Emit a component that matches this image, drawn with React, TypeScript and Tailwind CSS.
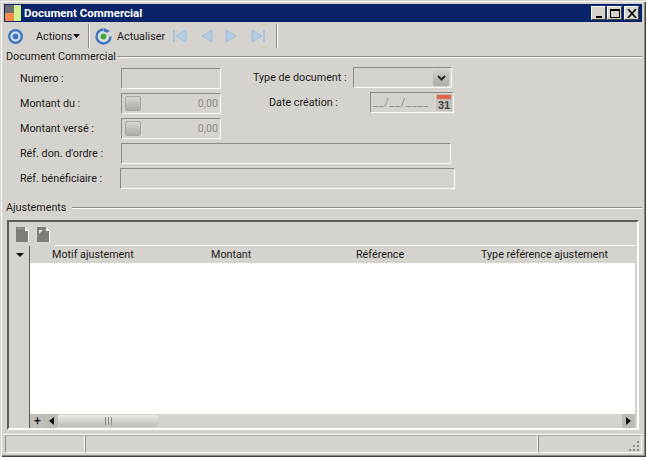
import React from "react";

const fontStyle = "font-['Roboto','Liberation_Sans',sans-serif]";
const sunken = "border border-[#8c8a84] border-r-white border-b-white bg-[#d6d3ce]";

const CaptionButton = ({ children }: { children: React.ReactNode }) => (
  <div className="flex h-[14px] w-[15px] items-center justify-center border border-[#404040] border-l-white border-t-white bg-[#d6d3ce]">
    {children}
  </div>
);

const GroupTitle = ({ title, width }: { title: string; width: string }) => (
  <div className="flex h-[13px] items-center pl-[2px]">
    <span className={`${width} shrink-0 whitespace-nowrap text-[#1a1a1a]`}>{title}</span>
    <div className="h-[2px] flex-1 border-t border-b border-t-[#8c8a84] border-b-white" />
  </div>
);

const NavIcon = ({ dir, bar }: { dir: "left" | "right"; bar?: boolean }) => (
  <svg width="16" height="16" viewBox="0 0 16 16">
    {dir === "left" ? (
      <>
        {bar && <rect x="1" y="2" width="2" height="12" fill="#a9c4dc" />}
        <path d="M14 2v12L4 8z" fill="#b4cde4" stroke="#97b6d3" strokeWidth="0.8" />
      </>
    ) : (
      <>
        <path d="M2 2v12l10-6z" fill="#b4cde4" stroke="#97b6d3" strokeWidth="0.8" />
        {bar && <rect x="13" y="2" width="2" height="12" fill="#a9c4dc" />}
      </>
    )}
  </svg>
);

const Spinner = () => (
  <div className="ml-[3px] h-[15px] w-[16px] rounded-[2px] border border-[#a8a6a0] bg-gradient-to-b from-[#d8d6d0] to-[#aeaca6]" />
);

const AmountRow = ({ label }: { label: string }) => (
  <div className="flex h-[21px] items-center">
    <span className="w-[101px] whitespace-nowrap text-[#1a1a1a]">{label}</span>
    <div className={`${sunken} flex h-[21px] w-[100px] items-center justify-between pr-[2px]`}>
      <Spinner />
      <span className="text-[#8c8a84]">0,00</span>
    </div>
  </div>
);

const PageIcon = ({ flip }: { flip?: boolean }) => (
  <svg width="13" height="15" viewBox="0 0 13 15">
    <path d="M0 0h9l4 4v11H0z" fill="#7f7d79" />
    <path d="M9 0l4 4H9z" fill="#fff" />
    <path d="M13 4v11h-1V4z" fill="#fff" />
    {flip ? <path d="M2 3h4L2 7z" fill="#e4e2dc" /> : <path d="M1 1h7v1H1z" fill="#a5a39e" />}
  </svg>
);

const HeaderCell = ({ width, children }: { width: string; children: string }) => (
  <div className={`${width} shrink-0 whitespace-nowrap text-[#1a1a1a]`}>{children}</div>
);

const ToolbarSeparator = ({ className }: { className: string }) => (
  <div className={`${className} h-[24px] w-[2px] border-l border-r border-l-[#8c8a84] border-r-white`} />
);

export default function App() {
  return (
    <div className={`${fontStyle} flex h-[457px] w-[646px] flex-col overflow-hidden bg-[#d6d3ce] p-[4px] text-[10.75px] leading-[13px] shadow-[inset_1px_1px_0_#d6d3ce,inset_2px_2px_0_#fff,inset_-1px_-1px_0_#404040,inset_-2px_-2px_0_#8c8a84]`}>
      {/* Title bar */}
      <div className="flex h-[18px] shrink-0 items-center justify-between bg-[#0a246a] pr-[3px]">
        <div className="flex items-center gap-[3px] pl-[1px]">
          <svg width="16" height="16" viewBox="0 0 16 16">
            <rect x="0" y="0" width="16" height="16" fill="#6e6e6e" />
            <rect x="0" y="8" width="9" height="8" fill="#f58a4b" />
            <rect x="9" y="0" width="7" height="16" fill="#d2f08c" />
          </svg>
          <span className="whitespace-nowrap text-[11.5px] font-bold text-white">Document Commercial</span>
        </div>
        <div className="flex">
          <CaptionButton>
            <div className="mt-[7px] h-[2px] w-[6px] bg-black" />
          </CaptionButton>
          <div className="ml-[1px]">
            <CaptionButton>
              <div className="h-[9px] w-[10px] border border-t-2 border-black" />
            </CaptionButton>
          </div>
          <div className="ml-[2px]">
            <CaptionButton>
              <svg width="10" height="9" viewBox="0 0 10 9">
                <path d="M1 0l8 9M9 0L1 9" stroke="#000" strokeWidth="1.6" />
              </svg>
            </CaptionButton>
          </div>
        </div>
      </div>

      {/* Toolbar */}
      <div className="flex h-[28px] shrink-0 items-center pl-[3px]">
        <svg width="17" height="17" viewBox="0 0 17 17">
          <circle cx="8.5" cy="8.5" r="7.5" fill="#3f78c0" />
          <circle cx="8.5" cy="8.5" r="5" fill="#dfe9f5" />
          <circle cx="8.5" cy="8.5" r="3" fill="#3f78c0" />
        </svg>
        <span className="ml-[12px] w-[35px] whitespace-nowrap text-[#1a1a1a]">Actions</span>
        <svg className="ml-[2px]" width="8" height="4" viewBox="0 0 8 4">
          <path d="M0 0h7L3.5 4z" fill="#111" />
        </svg>
        <ToolbarSeparator className="ml-[7px]" />
        <svg className="ml-[5px]" width="17" height="17" viewBox="0 0 17 17">
          <path d="M8.5 1.5a7 7 0 1 0 7 7" fill="none" stroke="#3f78c0" strokeWidth="2.4" />
          <path d="M9 0l6 3-6 3.5z" fill="#3f78c0" />
          <circle cx="8.5" cy="8.5" r="4.8" fill="#dfe3ea" />
          <circle cx="8.5" cy="8.5" r="3" fill="#3fa83f" />
        </svg>
        <span className="ml-[5px] w-[47px] whitespace-nowrap text-[#1a1a1a]">Actualiser</span>
        <div className="ml-[8px] flex items-center gap-[10px]">
          <NavIcon dir="left" bar />
          <NavIcon dir="left" />
          <NavIcon dir="right" />
          <NavIcon dir="right" bar />
        </div>
        <ToolbarSeparator className="ml-[10px]" />
      </div>

      {/* Document section */}
      <div className="flex flex-col">
        <GroupTitle title="Document Commercial" width="w-[111px]" />
        <div className="mt-[5px] flex pl-[16px]">
          <div className="flex flex-col gap-[4px]">
            <div className="flex h-[21px] items-center">
              <span className="w-[101px] whitespace-nowrap text-[#1a1a1a]">Numero :</span>
              <div className={`${sunken} h-[21px] w-[100px]`} />
            </div>
            <AmountRow label="Montant du :" />
            <AmountRow label="Montant versé :" />
          </div>
          <div className="-mt-[1px] flex flex-col">
            <div className="ml-[32px] flex h-[21px] items-center">
              <span className="w-[100px] whitespace-nowrap text-[#1a1a1a]">Type de document :</span>
              <div className={`${sunken} flex h-[21px] w-[99px] items-center justify-end pr-[2px]`}>
                <div className="flex h-[16px] w-[16px] items-center justify-center rounded-[2px] bg-gradient-to-b from-[#cfcdc7] to-[#aeaca6]">
                  <svg width="9" height="6" viewBox="0 0 9 6">
                    <path d="M1 1l3.5 3.5L8 1" fill="none" stroke="#2a2a2a" strokeWidth="2" />
                  </svg>
                </div>
              </div>
            </div>
            <div className="ml-[48px] mt-[4px] flex h-[21px] items-center">
              <span className="w-[101px] whitespace-nowrap text-[#1a1a1a]">Date création :</span>
              <div className={`${sunken} flex h-[21px] w-[84px] items-center justify-between pl-[2px] pr-[1px]`}>
                <span className="whitespace-nowrap tracking-[0.8px] text-[#8c8a84]">__/__/____</span>
                <svg width="16" height="17" viewBox="0 0 16 17">
                  <rect width="16" height="17" fill="#c4c2bc" />
                  <rect x="1" y="1" width="14" height="4" fill="#e0674a" />
                  <text x="8" y="15" textAnchor="middle" fontSize="11" fontWeight="700" fill="#444" fontFamily="Liberation Sans">31</text>
                </svg>
              </div>
            </div>
          </div>
        </div>
        <div className="mt-[4px] flex h-[21px] items-center pl-[16px]">
          <span className="w-[101px] whitespace-nowrap text-[#1a1a1a]">Réf. don. d'ordre :</span>
          <div className={`${sunken} h-[21px] w-[330px]`} />
        </div>
        <div className="mt-[4px] flex h-[21px] items-center pl-[16px]">
          <span className="w-[100px] whitespace-nowrap text-[#1a1a1a]">Réf. bénéficiaire :</span>
          <div className={`${sunken} h-[21px] w-[335px]`} />
        </div>
      </div>

      {/* Ajustements */}
      <div className="mt-[12px]">
        <GroupTitle title="Ajustements" width="w-[66px]" />
      </div>
      <div className="mx-[3px] mt-[6px] flex h-[210px] shrink-0 flex-col border-[2px] border-[#5e5c58] border-r-white border-b-white pl-[1px] pr-[2px] pt-[1px]">
        <div className="flex h-[22px] shrink-0 items-center gap-[8px] pl-[6px]">
          <PageIcon />
          <PageIcon flip />
        </div>
        <div className="ml-[45px] h-[1px] shrink-0 bg-white" />
        <div className="flex min-h-0 flex-1">
          <div className="flex w-[20px] shrink-0 flex-col items-center border-r border-r-[#5e5c58] pt-[7px]">
            <svg width="8" height="4" viewBox="0 0 8 4">
              <path d="M0 0h8L4 4z" fill="#111" />
            </svg>
          </div>
          <div className="flex min-w-0 flex-1 flex-col">
            <div className="flex h-[17px] shrink-0 items-center pl-[22px]">
              <HeaderCell width="w-[159px]">Motif ajustement</HeaderCell>
              <HeaderCell width="w-[145px]">Montant</HeaderCell>
              <HeaderCell width="w-[125px]">Référence</HeaderCell>
              <HeaderCell width="w-[131px]">Type référence ajustement</HeaderCell>
            </div>
            <div className="min-h-0 flex-1 bg-white" />
            <div className="flex h-[14px] shrink-0 items-center bg-[#d6d3ce]">
              <div className="flex h-[14px] w-[15px] items-center justify-center bg-[#c0beb8] text-[12px] text-black">+</div>
              <div className="flex h-[14px] w-[13px] items-center justify-center bg-[#bdbbb5]">
                <svg width="5" height="8" viewBox="0 0 5 8"><path d="M5 0v8L0 4z" fill="#111" /></svg>
              </div>
              <div className="relative flex h-[12px] w-[100px] items-center justify-center rounded-[3px] bg-gradient-to-b from-[#ecebe6] to-[#bdbbb5]">
                <div className="h-[8px] w-[7px] border-l border-r border-[#8c8a84] bg-[linear-gradient(90deg,transparent_2px,#8c8a84_2px,#8c8a84_3px,transparent_3px)]" />
              </div>
              <div className="flex-1" />
              <div className="flex h-[14px] w-[13px] items-center justify-center bg-[#bdbbb5]">
                <svg width="5" height="8" viewBox="0 0 5 8"><path d="M0 0v8l5-4z" fill="#111" /></svg>
              </div>
            </div>
          </div>
        </div>
      </div>

      {/* Status bar */}
      <div className="mt-[4px] flex h-[19px] shrink-0 border-t border-t-white">
        <div className={`${sunken} ml-[1px] w-[80px] border-t-[#a8a6a0]`} />
        <div className={`${sunken} w-[453px] border-t-[#a8a6a0]`} />
        <div className={`${sunken} relative flex-1 border-t-[#a8a6a0]`}>
          <svg className="absolute bottom-[1px] right-[1px]" width="11" height="11" viewBox="0 0 11 11">
            <path d="M8 1h2v2H8zM4 5h2v2H4zM8 5h2v2H8zM0 9h2v2H0zM4 9h2v2H4zM8 9h2v2H8z" fill="#8c8a84" />
          </svg>
        </div>
      </div>
    </div>
  );
}
